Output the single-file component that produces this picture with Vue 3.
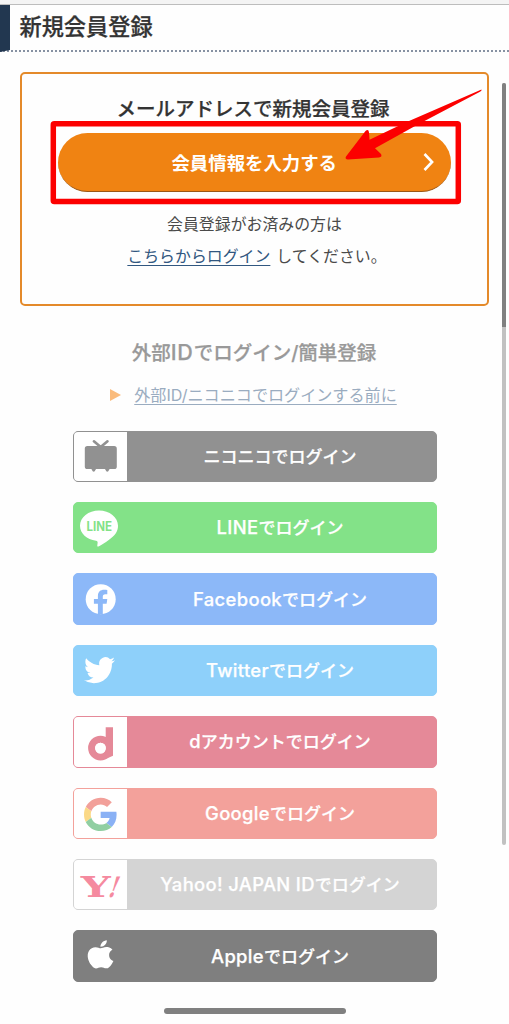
<script setup>
// name: the latin part of a label, set a little larger than the kana
const providers = [
    { id: 'niconico', name: '', label: 'ニコニコでログイン' },
    { id: 'line', name: 'LINE', label: 'でログイン' },
    { id: 'facebook', name: 'Facebook', label: 'でログイン' },
    { id: 'twitter', name: 'Twitter', label: 'でログイン' },
    { id: 'docomo', name: 'd', label: 'アカウントでログイン' },
    { id: 'google', name: 'Google', label: 'でログイン' },
    { id: 'yahoo', name: 'Yahoo! JAPAN ID', label: 'でログイン' },
    { id: 'apple', name: 'Apple', label: 'でログイン' },
]
</script>

<template>
    <div class="page">
        <div class="strip"></div>
        <header class="header">
            <h1>新規会員登録</h1>
        </header>

        <section class="register">
            <h2>メールアドレスで新規会員登録</h2>
            <button class="primary" type="button">
                <span>会員情報を入力する</span>
                <svg class="chevron" width="12" height="20" viewBox="0 0 12 20">
                    <path d="M1.5 2l7.6 8-7.6 8" fill="none" stroke="#fff" stroke-width="2.6"/>
                </svg>
            </button>
            <p class="note">会員登録がお済みの方は</p>
            <p class="note login"><a href="#">こちらからログイン</a><span>してください。</span></p>
        </section>

        <section class="external">
            <h2>外部<span class="big">ID</span>でログイン/簡単登録</h2>
            <div class="before">
                <span class="triangle"></span>
                <a href="#">外部ID/ニコニコでログインする前に</a>
            </div>
            <div class="providers">
                <button v-for="item in providers" :key="item.id" class="provider" :class="item.id" type="button">
                    <svg class="icon" width="53" height="50" viewBox="0.5 0.5 53 50">
                        <g v-if="item.id === 'niconico'" fill="#919191">
                            <rect x="11.3" y="15.6" width="32" height="23" rx="2.6"/>
                            <path d="M20.4 10.8l6.8 5.8 6.8-5.8" fill="none" stroke="#919191" stroke-width="2.6" stroke-linecap="round"/>
                            <path d="M17.6 38h5.2l-1.6 2.8q-1 .9-2 0zM31.2 38h5.2l-1.6 2.8q-1 .9-2 0z"/>
                        </g>
                        <g v-else-if="item.id === 'line'">
                            <path d="M25.5 8C15 8 6.5 14.7 6.5 23.3c0 7.7 6.8 13.7 16 15 1.3.3 1.8.8 1.6 2.2l-.3 2.4c-.1 1.2.5 1.5 1.7.9 5.9-3.2 13.5-8.2 17-13.3 1.4-2.2 2-4.4 2-7.2C44.5 14.7 36 8 25.5 8z" fill="#fff"/>
                            <text x="13" y="28.4" class="line-text" textLength="25.5" lengthAdjust="spacingAndGlyphs">LINE</text>
                        </g>
                        <g v-else-if="item.id === 'facebook'">
                            <circle cx="27.2" cy="25.7" r="15" fill="#fff"/>
                            <path d="M24.4 41V30.2h-4v-4.8h4v-2.8c0-4.4 2.5-6.4 6.2-6.4 1.2 0 2.4.1 3.2.3v4.2h-2c-1.9 0-2.5.9-2.5 2.4v2.3h4.5l-.7 4.8h-3.8V41z" fill="#8cb8f8"/>
                        </g>
                        <g v-else-if="item.id === 'twitter'" transform="translate(10.6 9.6) scale(1.29 1.34)">
                            <path fill="#fff" d="M23.953 4.57a10 10 0 01-2.825.775 4.958 4.958 0 002.163-2.723c-.951.555-2.005.959-3.127 1.184a4.92 4.92 0 00-8.384 4.482C7.69 8.095 4.067 6.13 1.64 3.162a4.822 4.822 0 00-.666 2.475c0 1.71.87 3.213 2.188 4.096a4.904 4.904 0 01-2.228-.616v.06a4.923 4.923 0 003.946 4.827 4.996 4.996 0 01-2.212.085 4.936 4.936 0 004.604 3.417 9.867 9.867 0 01-6.102 2.105c-.39 0-.779-.023-1.17-.067a13.995 13.995 0 007.557 2.209c9.053 0 13.998-7.496 13.998-13.985 0-.21 0-.42-.015-.63A9.935 9.935 0 0024 4.59z"/>
                        </g>
                        <g v-else-if="item.id === 'docomo'">
                            <circle cx="27" cy="31.6" r="8.9" fill="none" stroke="#e58998" stroke-width="7"/>
                            <path d="M32.2 10.7h7.3v28.6l-7.3 3.2z" fill="#e58998"/>
                            <circle cx="27" cy="31.6" r="5.4" fill="#fff"/>
                        </g>
                        <g v-else-if="item.id === 'google'" transform="translate(10.5 10.3) scale(.694)">
                            <path fill="#f2a09a" d="M24 9.5c3.54 0 6.71 1.22 9.21 3.6l6.85-6.85C35.9 2.38 30.47 0 24 0 14.62 0 6.51 5.38 2.56 13.22l7.98 6.19C12.43 13.72 17.74 9.5 24 9.5z"/>
                            <path fill="#8ab1f5" d="M46.98 24.55c0-1.57-.15-3.09-.38-4.55H24v9.02h12.94c-.58 2.96-2.26 5.48-4.78 7.18l7.73 6c4.51-4.18 7.09-10.36 7.09-17.65z"/>
                            <path fill="#fbd987" d="M10.53 28.59c-.48-1.45-.76-2.99-.76-4.59s.27-3.14.76-4.59l-7.98-6.19C.92 16.46 0 20.12 0 24c0 3.88.92 7.54 2.56 10.78l7.97-6.19z"/>
                            <path fill="#91cfa2" d="M24 48c6.48 0 11.93-2.13 15.89-5.81l-7.73-6c-2.15 1.45-4.92 2.3-8.16 2.3-6.26 0-11.57-4.22-13.47-9.91l-7.98 6.19C6.51 42.62 14.62 48 24 48z"/>
                        </g>
                        <g v-else-if="item.id === 'yahoo'" fill="#f58a9f">
                            <text x="7.3" y="37" class="yahoo-text" textLength="30" lengthAdjust="spacingAndGlyphs">Y</text>
                            <text transform="translate(33 37) skewX(-20)" class="yahoo-text" textLength="9" lengthAdjust="spacingAndGlyphs">!</text>
                        </g>
                        <g v-else transform="translate(11.3 9.8) scale(1.31 1.17)">
                            <path fill="#fff" d="M12.152 6.896c-.948 0-2.415-1.078-3.96-1.04-2.04.027-3.91 1.183-4.961 3.014-2.117 3.675-.546 9.103 1.519 12.09 1.013 1.454 2.208 3.09 3.792 3.039 1.52-.065 2.09-.987 3.935-.987 1.831 0 2.35.987 3.96.948 1.637-.026 2.676-1.48 3.676-2.948 1.156-1.688 1.636-3.325 1.662-3.415-.039-.013-3.182-1.221-3.22-4.857-.026-3.04 2.48-4.494 2.597-4.559-1.429-2.09-3.623-2.324-4.39-2.376-2-.156-3.675 1.09-4.61 1.09zM15.53 3.83c.843-1.012 1.4-2.427 1.245-3.83-1.207.052-2.662.805-3.532 1.818-.78.896-1.454 2.338-1.273 3.714 1.338.104 2.715-.688 3.559-1.701"/>
                        </g>
                    </svg>
                    <span class="label"><span class="name">{{ item.name }}</span>{{ item.label }}</span>
                </button>
            </div>
        </section>

        <div class="home-bar"></div>
        <div class="scrollbar"><div class="thumb"></div></div>

        <!-- highlight frame and arrow over the button -->
        <svg class="marker" width="509" height="220" viewBox="0 0 509 220">
            <rect x="53.3" y="123.8" width="405" height="77.7" rx="1" fill="none" stroke="#fc0000" stroke-width="5.5"/>
            <path d="M481.5 89.6Q482 91 480 91.8L416 125.5 375 148.3 381 154Q382.5 157 379 157.5L348 159.5Q344.5 159 346 156.5L365.500 131Q368.500 128.500 369 132.500L369.500 139.700 405 122.800z" fill="#fc0000"/>
        </svg>
    </div>
</template>

<style>
body {
    margin: 0;
    background: #fff;
}
</style>

<style scoped>
.page {
    position: relative;
    width: 509px;
    height: 1024px;
    overflow: hidden;
    background: #fefefe;
    color: #333;
    font-family: Inter, "Noto Sans CJK JP", sans-serif;
}

h1, h2, p {
    margin: 0;
    white-space: nowrap;
}

h1, h2 {
    font-weight: 500;
    -webkit-text-stroke: 0.25px currentColor;
}

button {
    padding: 0;
    font-family: inherit;
    color: #fff;
}

.strip {
    height: 4px;
    background: #f4f4f4;
    border-bottom: 1px solid #bdbdbd;
}

.header {
    box-sizing: border-box;
    height: 47px;
    border-left: 10px solid #223750;
    border-bottom: 2px dotted #8792a3;
    padding-left: 9.5px;
}

h1 {
    font-size: 22.2px;
    line-height: 43px;
}

.register {
    box-sizing: border-box;
    width: 469px;
    height: 234px;
    margin: 20px 0 0 20px;
    border: 2px solid #e48a2a;
    border-radius: 5px;
    padding-top: 20px;
    display: flex;
    flex-direction: column;
    align-items: center;
}

h2 {
    font-size: 19.5px;
    line-height: 30px;
}

.register h2 {
    margin-left: -3px;
}

.primary {
    box-sizing: border-box;
    flex-shrink: 0;
    width: 393px;
    height: 59px;
    margin-top: 9px;
    border: 0;
    border-bottom: 1px solid #9b5716;
    border-radius: 30px;
    background: #f08312;
    display: flex;
    align-items: center;
    justify-content: flex-end;
    padding-right: 16px;
    font-size: 18.4px;
    font-weight: 700;
}

.primary .chevron {
    margin-left: 86px;
}

.note {
    font-size: 15.9px;
    line-height: 32px;
    color: #4a4a4a;
}

.primary + .note {
    margin-top: 16.5px;
}

.login {
    display: flex;
    gap: 6px;
    margin-left: 5px;
}

.login a {
    color: #315780;
    text-underline-offset: 3px;
    text-decoration-thickness: 1px;
}

.external {
    margin-top: 31px;
    display: flex;
    flex-direction: column;
    align-items: center;
}

.external h2 {
    color: #999;
    margin-left: -1px;
}

.big {
    font-size: 21.5px;
    letter-spacing: 0.8px;
}

.before {
    display: flex;
    align-items: center;
    gap: 13px;
    margin-top: 13px;
    margin-left: -2px;
    font-size: 16.1px;
    line-height: 28px;
    white-space: nowrap;
}

.before a {
    color: #9aacc0;
    text-underline-offset: 3px;
    text-decoration-thickness: 1px;
}

.triangle {
    border-left: 11px solid #fabb7c;
    border-top: 6px solid transparent;
    border-bottom: 6px solid transparent;
}

.providers {
    display: grid;
    gap: 20px;
    width: 364px;
    margin-top: 21.6px;
}

.provider {
    box-sizing: border-box;
    height: 51.4px;
    border: 1px solid var(--tone);
    border-radius: 5px;
    background: var(--tone);
    display: flex;
    align-items: center;
    overflow: hidden;
}

.icon {
    flex-shrink: 0;
    background: var(--panel, transparent);
}

.label {
    flex: 1;
    margin-left: -2px;
    font-size: 17px;
    line-height: 24px;
    font-weight: 500;
    white-space: nowrap;
    text-align: center;
    -webkit-text-stroke: 0.25px currentColor;
}

.name {
    font-size: 18.4px;
    letter-spacing: 0.35px;
}

.niconico {
    --tone: #919191;
    --panel: #fff;
}

.line {
    --tone: #83e288;
}

.facebook {
    --tone: #8cb8f8;
}

.twitter {
    --tone: #8ed0fa;
}

.docomo {
    --tone: #e58998;
    --panel: #fff;
}

.google {
    --tone: #f3a19b;
    --panel: #fff;
}

.yahoo {
    --tone: #d4d4d4;
    --panel: #fff;
}

.apple {
    --tone: #7f7f7f;
}

.line-text {
    font: 700 12.8px Inter, sans-serif;
    fill: #83e288;
}

.yahoo-text {
    font: 700 28px "DejaVu Serif", serif;
}

.home-bar {
    width: 182px;
    height: 6px;
    margin: 26px 0 0 163.5px;
    border-radius: 3px;
    background: #808080;
}

.scrollbar {
    position: absolute;
    top: 83px;
    left: 501.5px;
    width: 4px;
    height: 762px;
    border-radius: 2px;
    background: #c1c1c1;
    overflow: hidden;
}

.thumb {
    height: 244px;
    background: #808080;
}

.marker {
    position: absolute;
    top: 0;
    left: 0;
    pointer-events: none;
}
</style>
